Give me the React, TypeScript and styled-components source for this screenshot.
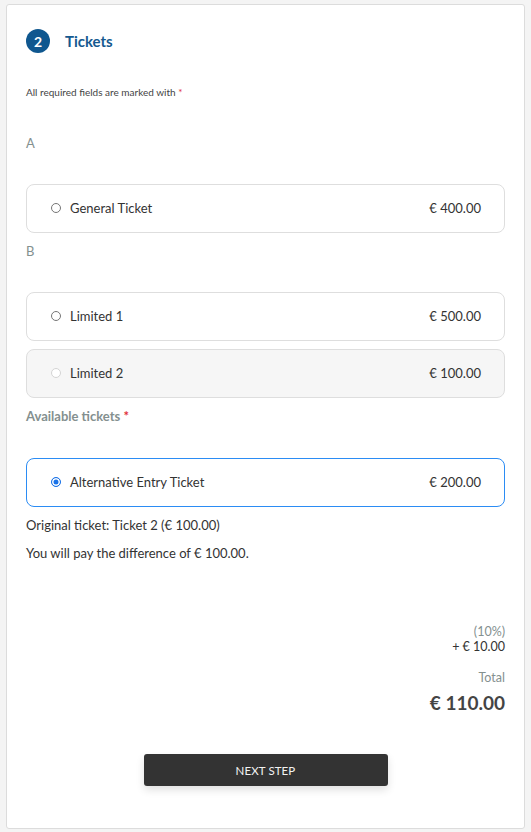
import React from "react";
import styled, { createGlobalStyle } from "styled-components";

const GlobalStyle = createGlobalStyle`
    html, body {
        margin: 0;
        padding: 0;
        background: #f4f4f4;
        font-family: Lato, "Open Sans", Arial, sans-serif;
        color: #333;
    }
`;

const Page = styled.div`
    padding: 4px 6px 3px 6px;
`;

const Card = styled.section`
    background: #fff;
    border: 1px solid #dcdcdc;
    border-radius: 3px;
    padding: 24px 19px 41px 19px;
    box-sizing: border-box;
    min-height: 825px;
`;

const Header = styled.header`
    display: flex;
    align-items: center;
    gap: 15px;
    height: 24px;
`;

const StepBadge = styled.span`
    width: 24px;
    height: 24px;
    border-radius: 50%;
    background: #0f578f;
    color: #fff;
    font-size: 14px;
    font-weight: 700;
    display: flex;
    align-items: center;
    justify-content: center;
`;

const Title = styled.h2`
    margin: 0;
    font-size: 15px;
    font-weight: 700;
    color: #15598f;
`;

const Note = styled.p`
    margin: 32px 0 0;
    font-size: 10px;
    line-height: 14px;
    color: #444;
`;

const Required = styled.span`
    color: #e0303a;
`;

const GroupLabel = styled.div<{ $bold?: boolean; $top: number; $bottom?: number }>`
    margin: ${(p) => p.$top}px 0 ${(p) => p.$bottom ?? 33}px;
    font-size: 13px;
    line-height: 16px;
    font-weight: ${(p) => (p.$bold ? 700 : 400)};
    color: #84908f;
`;

const OptionList = styled.div`
    display: flex;
    flex-direction: column;
    gap: 8px;
`;

const Option = styled.label<{ $selected?: boolean; $disabled?: boolean }>`
    display: flex;
    align-items: center;
    height: 49px;
    box-sizing: border-box;
    padding: 0 23px 1px 24px;
    border: 1px solid ${(p) => (p.$selected ? "#2b8cf4" : "#dedede")};
    border-radius: 8px;
    background: ${(p) => (p.$disabled ? "#f6f6f6" : "#fff")};
    font-size: 13px;
    color: #333;
`;

const Radio = styled.span<{ $checked?: boolean; $disabled?: boolean }>`
    width: 10px;
    height: 10px;
    border-radius: 50%;
    box-sizing: border-box;
    margin-right: 9px;
    flex-shrink: 0;
    border: 1px solid ${(p) => (p.$checked ? "#1a73e8" : p.$disabled ? "#d4d4d4" : "#767676")};
    background: ${(p) => (p.$checked ? "#1a73e8" : "#fff")};
    box-shadow: ${(p) => (p.$checked ? "inset 0 0 0 1.5px #fff" : "none")};
`;

const OptionName = styled.span`
    flex: 1;
`;

const Price = styled.span`
    color: #333;
`;

const Info = styled.p<{ $top: number }>`
    margin: ${(p) => p.$top}px 0 0;
    font-size: 13px;
    line-height: 18px;
    color: #333;
`;

const Summary = styled.div`
    margin-top: 62px;
    display: flex;
    flex-direction: column;
    align-items: flex-end;
    text-align: right;
`;

const Muted = styled.span`
    font-size: 12.5px;
    line-height: 15px;
    color: #84908f;
`;

const Line = styled.span`
    font-size: 12.5px;
    line-height: 15px;
    color: #333;
`;

const TotalLabel = styled(Muted)`
    margin-top: 16px;
`;

const TotalValue = styled.span`
    margin-top: 6px;
    font-size: 19px;
    line-height: 24px;
    font-weight: 700;
    color: #444;
`;

const Actions = styled.div`
    display: flex;
    justify-content: center;
    margin-top: 39px;
`;

const NextButton = styled.button`
    width: 244px;
    height: 32px;
    border: none;
    border-radius: 3px;
    background: #333;
    color: #f2f2f2;
    font-family: inherit;
    font-size: 11.5px;
    letter-spacing: 0.1px;
    box-shadow: 0 4px 8px rgba(0, 0, 0, 0.12);
    cursor: pointer;
`;

type Ticket = { name: string; price: string; disabled?: boolean; selected?: boolean };

const groups: { label: string; tickets: Ticket[] }[] = [
    { label: "A", tickets: [{ name: "General Ticket", price: "€ 400.00" }] },
    {
        label: "B",
        tickets: [
            { name: "Limited 1", price: "€ 500.00" },
            { name: "Limited 2", price: "€ 100.00", disabled: true },
        ],
    },
];

function TicketOption({ ticket }: { ticket: Ticket }) {
    return (
        <Option $selected={ticket.selected} $disabled={ticket.disabled}>
            <Radio $checked={ticket.selected} $disabled={ticket.disabled} />
            <OptionName>{ticket.name}</OptionName>
            <Price>{ticket.price}</Price>
        </Option>
    );
}

export default function App() {
    return (<>
        <GlobalStyle />
        <Page>
            <Card>
                <Header>
                    <StepBadge>2</StepBadge>
                    <Title>Tickets</Title>
                </Header>
                <Note>All required fields are marked with <Required>*</Required></Note>
                {groups.map((g, i) => (
                    <React.Fragment key={g.label}>
                        <GroupLabel $top={i === 0 ? 36 : 10}>{g.label}</GroupLabel>
                        <OptionList>
                            {g.tickets.map((t) => <TicketOption key={t.name} ticket={t} />)}
                        </OptionList>
                    </React.Fragment>
                ))}
                <GroupLabel $bold $top={10} $bottom={34}>Available tickets <Required>*</Required></GroupLabel>
                <OptionList>
                    <TicketOption ticket={{ name: "Alternative Entry Ticket", price: "€ 200.00", selected: true }} />
                </OptionList>
                <Info $top={9}>Original ticket: Ticket 2 (€ 100.00)</Info>
                <Info $top={10}>You will pay the difference of € 100.00.</Info>
                <Summary>
                    <Muted>(10%)</Muted>
                    <Line>+ € 10.00</Line>
                    <TotalLabel>Total</TotalLabel>
                    <TotalValue>€ 110.00</TotalValue>
                </Summary>
                <Actions>
                    <NextButton>NEXT STEP</NextButton>
                </Actions>
            </Card>
        </Page>
    </>);
}
